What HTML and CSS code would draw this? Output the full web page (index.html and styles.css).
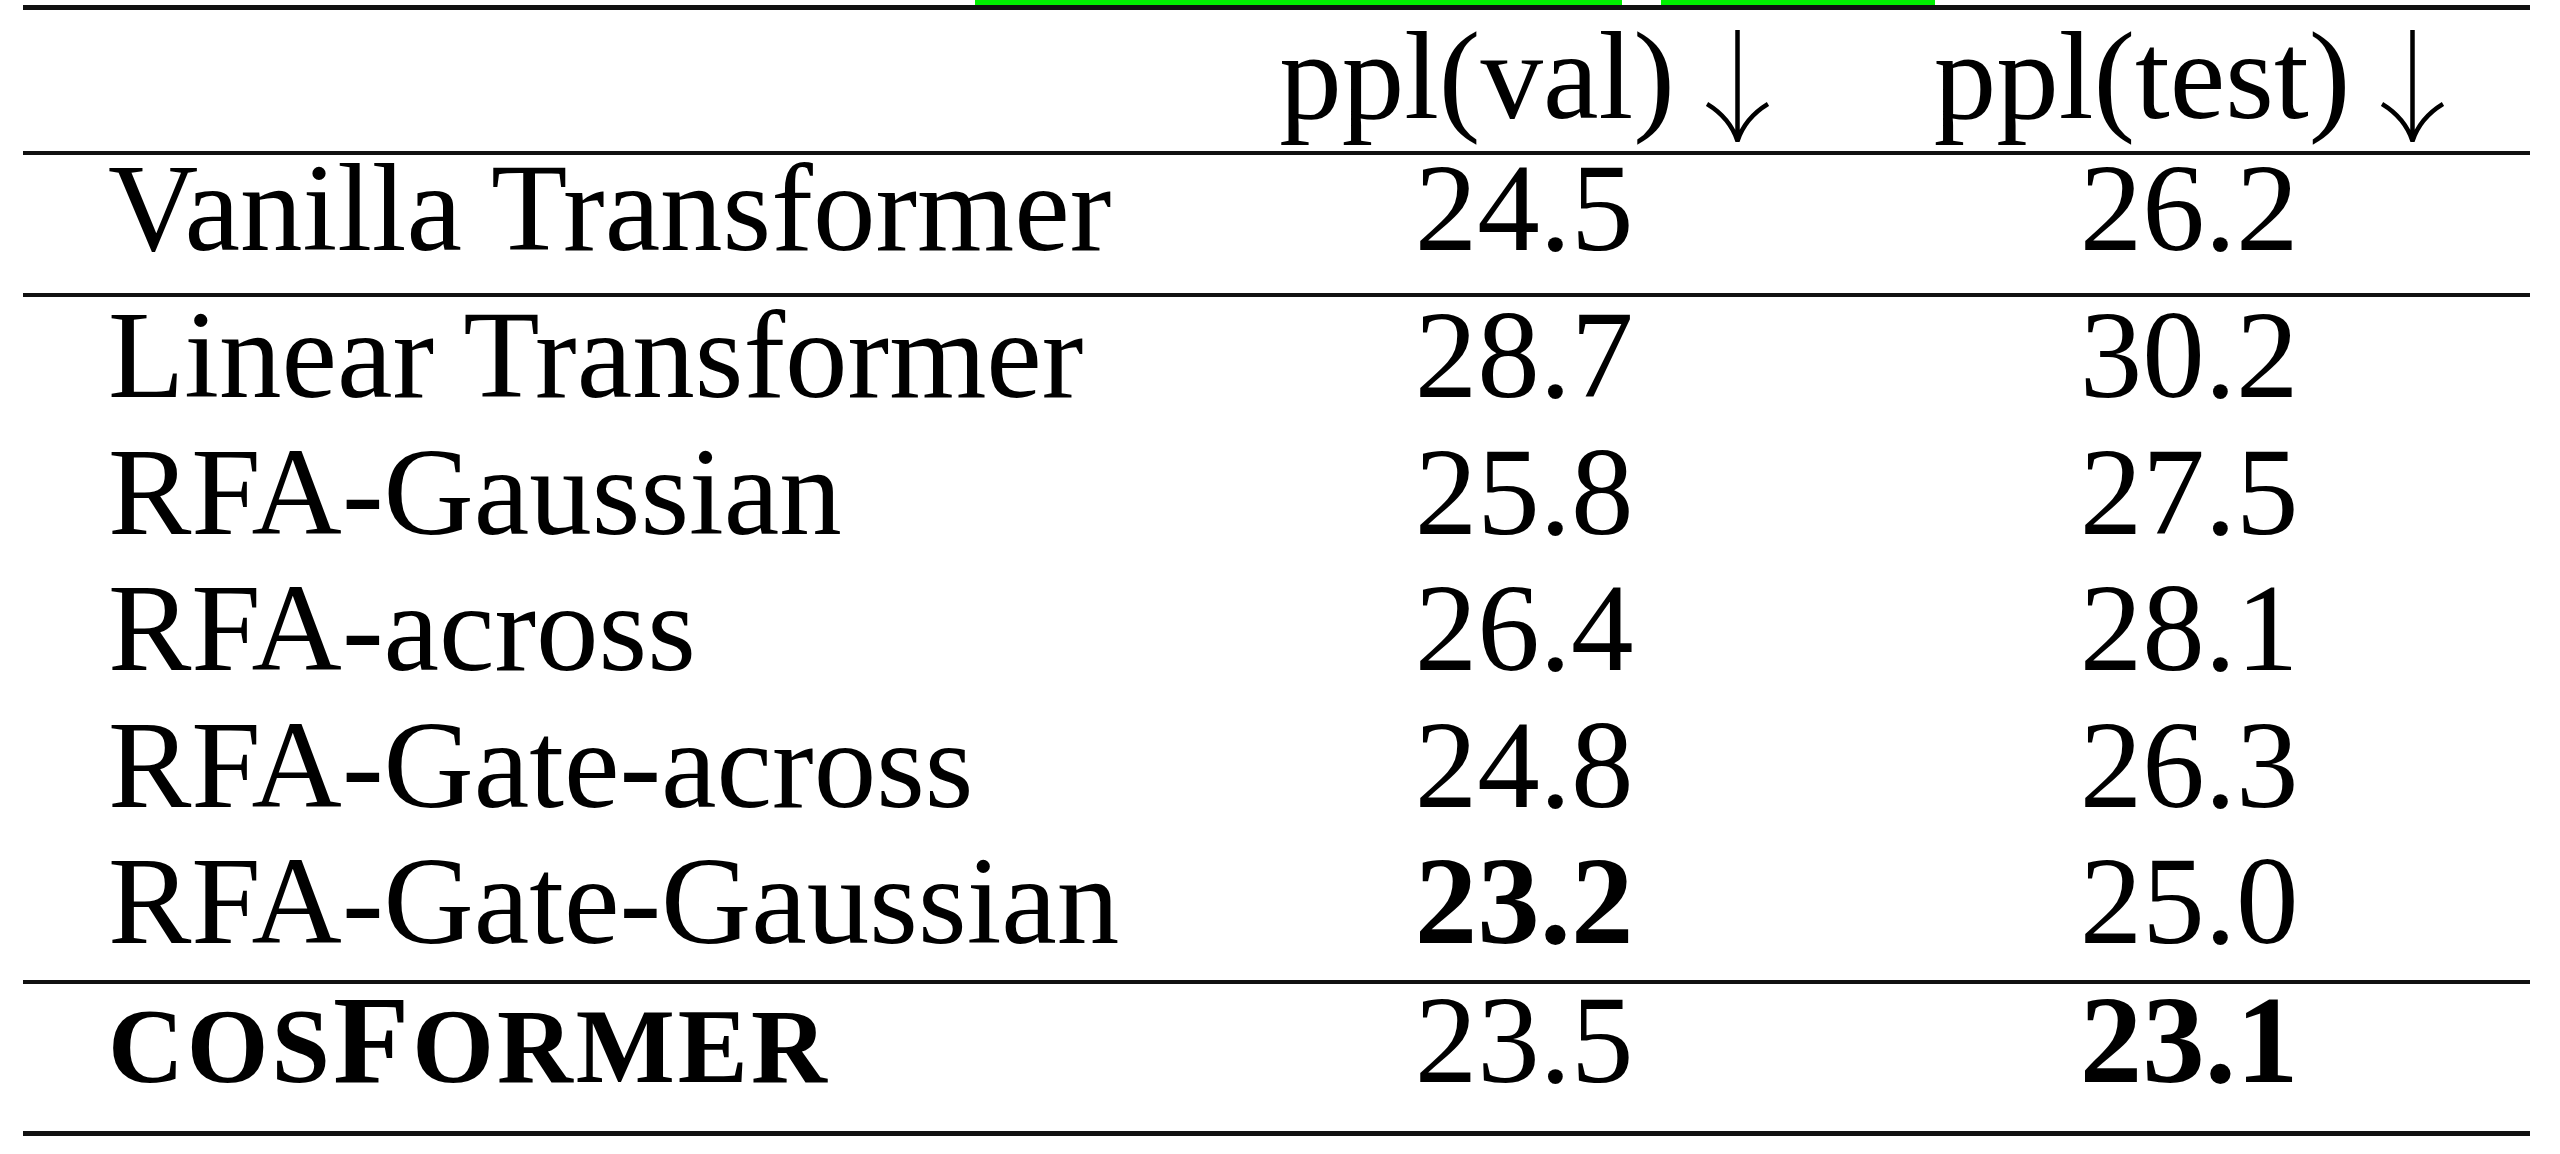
FILE: index.html
```html
<!DOCTYPE html>
<html lang="en">

<head>
  <meta charset="UTF-8">
  <title>Perplexity results</title>
  <link rel="stylesheet" href="styles.css">
</head>

<body>
  <div class="results">
    <!-- highlight marks sitting on the top rule -->
    <div class="marks">
      <div class="mark mark-a"></div>
      <div class="mark mark-b"></div>
    </div>

    <div class="row head">
      <div class="cell name"></div>
      <div class="cell num">ppl(val)<svg class="arrow" viewBox="0 0 63 112"><path d="M31.5 0 V110 M1 74 Q24 88 31.5 111 Q39 88 62 74"/></svg></div>
      <div class="cell num">ppl(test)<svg class="arrow" viewBox="0 0 63 112"><path d="M31.5 0 V110 M1 74 Q24 88 31.5 111 Q39 88 62 74"/></svg></div>
    </div>

    <div class="group">
      <div class="row base">
        <div class="cell name">Vanilla Transformer</div>
        <div class="cell num">24.5</div>
        <div class="cell num">26.2</div>
      </div>
    </div>

    <div class="group">
      <div class="row mid">
        <div class="cell name">Linear Transformer</div>
        <div class="cell num">28.7</div>
        <div class="cell num">30.2</div>
      </div>
      <div class="row mid">
        <div class="cell name">RFA-Gaussian</div>
        <div class="cell num">25.8</div>
        <div class="cell num">27.5</div>
      </div>
      <div class="row mid">
        <div class="cell name">RFA-across</div>
        <div class="cell num">26.4</div>
        <div class="cell num">28.1</div>
      </div>
      <div class="row mid">
        <div class="cell name">RFA-Gate-across</div>
        <div class="cell num">24.8</div>
        <div class="cell num">26.3</div>
      </div>
      <div class="row mid">
        <div class="cell name">RFA-Gate-Gaussian</div>
        <div class="cell num best">23.2</div>
        <div class="cell num">25.0</div>
      </div>
    </div>

    <div class="group group-last">
      <div class="row ours">
        <div class="cell name best"><span class="sc">cos</span>F<span class="sc">ormer</span></div>
        <div class="cell num">23.5</div>
        <div class="cell num best">23.1</div>
      </div>
    </div>
  </div>
</body>

</html>
```

FILE: styles.css
```css
body {
  margin: 0;
  background: #fff;
  color: #000;
  font-family: "Liberation Serif", "Times New Roman", serif;
}

.results {
  width: 2507px;
  margin-left: 23px;
  font-size: 125px;
}

.marks {
  display: flex;
  gap: 39px;
  height: 5px;
  padding-left: 952px;
}

.mark {
  height: 5px;
  background: #00f000;
}

.mark-a {
  width: 647px;
}

.mark-b {
  width: 274px;
}

.row {
  display: grid;
  grid-template-columns: 1177px 648px 682px;
  line-height: 104px;
  white-space: nowrap;
}

.head {
  border-top: 5px solid #111;
  padding: 14px 0 9px;
}

.group {
  border-top: 4px solid #111;
}

.group-last {
  border-bottom: 5px solid #111;
}

.base {
  padding: 1px 0 33px;
}

.mid {
  padding: 6px 0 26.5px;
}

.ours {
  padding: 4px 0 32.5px;
}

.name {
  padding-left: 85px;
}

.num {
  text-align: center;
}

.best {
  font-weight: bold;
}

.sc {
  text-transform: uppercase;
  font-size: 0.84em;
}

.name.best {
  letter-spacing: 3px;
}

.arrow {
  width: 63px;
  height: 112px;
  margin-left: 31px;
  vertical-align: -24px;
  fill: none;
  stroke: #000;
  stroke-width: 4.5;
}
```
